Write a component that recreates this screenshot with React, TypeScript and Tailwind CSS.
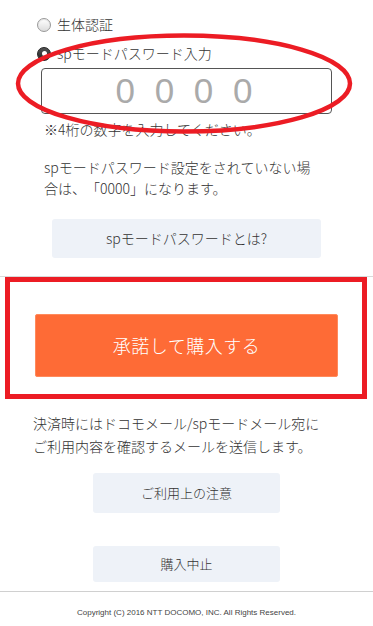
import React from "react";

export default function App() {
  return (
    <div className="relative w-[373px] min-h-[626px] bg-white text-[#333] font-light font-['Noto_Sans_CJK_JP',sans-serif] [text-spacing-trim:space-all] overflow-hidden">
      {/* Top section */}
      <div className="pt-[16px]">
        <label className="flex items-center ml-[37px] h-[17px]">
          <span className="w-[14px] h-[14px] rounded-full border border-[#999] bg-gradient-to-b from-white to-[#dcdcdc] shadow-[inset_0_1px_1px_rgba(0,0,0,0.1)]" />
          <span className="ml-[6px] text-[14px] leading-[17px]">生体認証</span>
        </label>
        <label className="flex items-center ml-[37px] mt-[12px] h-[17px]">
          <span className="w-[14px] h-[14px] rounded-full border border-[#222] bg-gradient-to-b from-[#555] to-[#222] flex items-center justify-center">
            <span className="w-[5px] h-[5px] rounded-full bg-white" />
          </span>
          <span className="ml-[6px] text-[14px] leading-[17px]">spモードパスワード入力</span>
        </label>
        <div className="ml-[41px] mt-[6px] w-[291px] h-[46px] border border-[#555] rounded-[4px] flex items-center justify-center">
          <span className="text-[35px] leading-[40px] text-[#aaa] tracking-[5px] font-normal font-['Liberation_Sans',sans-serif]">0 0 0 0</span>
        </div>
        <p className="ml-[44px] mt-[5px] text-[14px] leading-[20px]">※4桁の数字を入力してください。</p>
        <p className="ml-[44px] mt-[18px] w-[272px] text-[14px] leading-[21px]">
          spモードパスワード設定をされていない場合は、「0000」になります。
        </p>
        <div className="ml-[52px] mt-[20px] w-[269px] h-[39px] rounded-[3px] bg-[#eef2f8] flex items-center justify-center text-[14px]">
          spモードパスワードとは?
        </div>
      </div>

      <div className="mt-[18px] h-px bg-[#d9d9d9]" />

      {/* Purchase button */}
      <div className="pt-[37px]">
        <div className="ml-[35px] w-[303px] h-[63px] rounded-[2px] bg-[#fe6b36] border border-[#ff8a5c] flex items-center justify-center text-white text-[18px] tracking-[0.5px]">
          承諾して購入する
        </div>
      </div>

      <p className="ml-[33px] mt-[35px] w-[300px] text-[14px] leading-[23px]">
        決済時にはドコモメール/spモードメール宛にご利用内容を確認するメールを送信します。
      </p>

      <div className="ml-[93px] mt-[15px] w-[187px] h-[40px] rounded-[3px] bg-[#eef2f8] flex items-center justify-center text-[13px]">
        ご利用上の注意
      </div>
      <div className="ml-[93px] mt-[33px] w-[187px] h-[36px] rounded-[3px] bg-[#eef2f8] flex items-center justify-center text-[13px]">
        購入中止
      </div>

      <div className="mt-[9px] h-px bg-[#d0d0d0]" />
      <p className="pt-[15px] text-center text-[8px] leading-[12px] text-[#444] font-normal font-['Liberation_Sans',sans-serif]">
        Copyright (C) 2016 NTT DOCOMO, INC. All Rights Reserved.
      </p>

      {/* Annotation overlays */}
      <svg className="absolute left-0 top-0 pointer-events-none" width="373" height="140" viewBox="0 0 373 140">
        <ellipse cx="184" cy="83.5" rx="166" ry="48" fill="none" stroke="#ec1c24" strokeWidth="4.5" />
      </svg>
      <div className="absolute left-[5px] top-[277px] w-[362px] h-[122px] border-[5px] border-[#ec1c24] pointer-events-none" />
    </div>
  );
}
